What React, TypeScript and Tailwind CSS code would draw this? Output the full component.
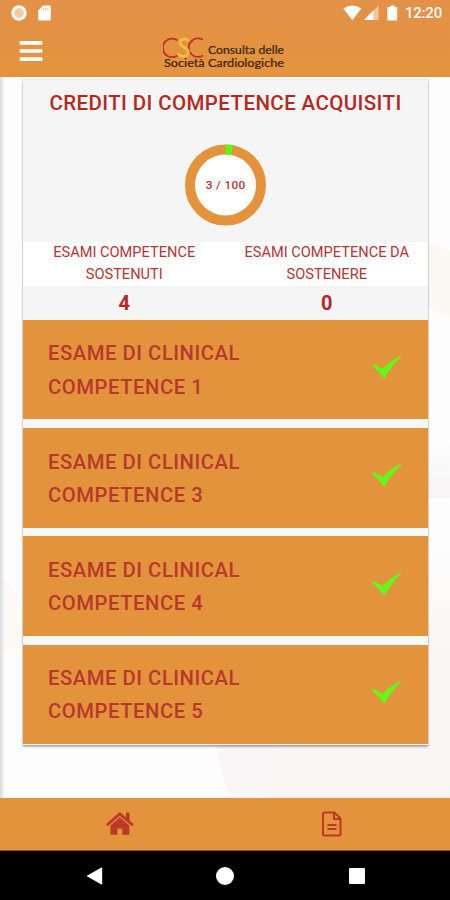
import { FaBars } from 'react-icons/fa';

const exams = [1, 3, 4, 5];

function StatusBar() {
  return (
    <div className="flex h-[26px] items-center justify-between pl-[11px] pr-2">
      <div className="flex items-center gap-[11px]">
        <svg width="16" height="16" viewBox="0 0 16 16">
          <circle cx="8" cy="8" r="5" fill="#f3c99d" />
          <circle cx="8" cy="8" r="6.2" fill="none" stroke="#fff" strokeWidth="3" />
        </svg>
        <svg width="13" height="16" viewBox="0 0 13 16">
          <path d="M5 0.5H11.5Q12.8 0.5 12.8 2V14Q12.8 15.5 11.5 15.5H1.5Q0.2 15.5 0.2 14V5.5Z" fill="#fff" />
          <path d="M5.3 3V5.5M7.6 3V5.5M9.9 3V5.5" stroke="#ecb783" strokeWidth="1" />
        </svg>
      </div>
      <div className="flex items-center">
        <svg width="19" height="16" viewBox="0 0 19 16">
          <path d="M0.3 3.6Q9.3 -2.8 18.3 3.6L9.3 15.2Z" fill="#fff" />
        </svg>
        <svg className="ml-0.5" width="15" height="16" viewBox="0 0 15 16">
          <path d="M0 15L14.5 0.5V15Z" fill="#f2c697" />
          <path d="M0 15L9.5 5.5V15Z" fill="#fff" />
        </svg>
        <svg className="ml-2" width="11" height="16" viewBox="0 0 11 16">
          <path d="M3.3 0.5H7.5V2H10.2V15.5H0.4V2H3.3Z" fill="#fff" />
        </svg>
        <span className="ml-[7px] text-[15px] leading-none font-medium tracking-[-0.2px] text-white">12:20</span>
      </div>
    </div>
  );
}

function Logo() {
  return (
    <svg width="124" height="36" viewBox="0 0 124 36">
      <g fill="none" strokeWidth="1.8">
        <path d="M14.5 4.3A9.3 9.3 0 1 0 14.5 19.5" stroke="#c32b2d" />
        <path d="M40 3.8A9.3 9.3 0 1 0 40 19.5" stroke="#c32b2d" />
        <path d="M25.5 5.5C23.5 1.5 16.5 2.5 17 7C17.5 11.5 25 11 25.3 15.8C25.5 21 18 22 15 17.5" stroke="#f7bb3d" strokeWidth="2.8" />
      </g>
      <g fill="#39250f" stroke="#39250f" strokeWidth="0.2" fontFamily="Lato, sans-serif" fontSize="10.5">
        <text x="45" y="18" textLength="76" lengthAdjust="spacingAndGlyphs">Consulta delle</text>
        <text x="1" y="30.5" textLength="120" lengthAdjust="spacingAndGlyphs">Società Cardiologiche</text>
      </g>
    </svg>
  );
}

function CreditsRing({ value, total }: { value: number; total: number }) {
  return (
    <svg className="mx-auto block" width="81" height="82" viewBox="0 0 81 82">
      <circle cx="40.5" cy="41" r="35.5" fill="#fff" stroke="#e4933d" strokeWidth="10" />
      <circle
        cx="40.5"
        cy="41"
        r="35.5"
        fill="none"
        stroke="#5df70b"
        strokeWidth="10"
        pathLength={total}
        strokeDasharray={`${value} ${total}`}
        transform="rotate(-90 40.5 41)"
      />
      <text x="40.5" y="44.7" textAnchor="middle" fill="#b03434" fontSize="11.8" fontWeight="500" textLength="39.5">
        {`${value} / ${total}`}
      </text>
    </svg>
  );
}

function ExamRow({ number }: { number: number }) {
  return (
    <div className="flex h-[99.7px] items-center justify-between bg-[#e4933d] pl-[25px] pr-[26px]">
      <p className="mt-[2px] w-[240px] text-[20.3px] leading-[33.3px] font-medium tracking-[0.52px] text-[#b7392b]">
        <span className="block h-[33.3px]">ESAME DI CLINICAL</span>
        <span className="block h-[33.3px]">{`COMPETENCE ${number}`}</span>
      </p>
      <svg className="-mt-1" width="31" height="25" viewBox="0 0 31 25">
        <path d="M0.5 10.2Q3 9 5 10L11.5 14Q19 5.5 30 0.7L30.3 1.7Q20 11.5 13.2 24Q8 16.5 0.5 10.2Z" fill="#62f81a" />
      </svg>
    </div>
  );
}

export default function App() {
  return (
    <div className="flex h-[900px] w-[450px] flex-col overflow-hidden bg-black font-[Roboto,sans-serif]">
      <header className="h-[77px] shrink-0 bg-gradient-to-b from-[#e39148] to-[#e4933d]">
        <StatusBar />
        <div className="flex h-[51px] items-center">
          <FaBars className="-mt-0.5 ml-[18px] text-[26px] text-white" />
          <div className="mt-1 ml-[119px]">
            <Logo />
          </div>
        </div>
      </header>

      <main className="relative h-[721px] shrink-0 overflow-hidden bg-[#fdfdfd] pt-[3px] pr-[22px] pl-[23px]">
        <svg className="absolute inset-0" width="450" height="721" viewBox="0 0 450 721">
          <defs>
            <linearGradient id="band" x1="0" y1="0" x2="0" y2="1">
              <stop offset="0" stopColor="#fdfdfd" />
              <stop offset="1" stopColor="#f6f4f5" />
            </linearGradient>
            <linearGradient id="fade" x1="0" y1="0" x2="0" y2="1">
              <stop offset="0" stopColor="#fdfdfd" />
              <stop offset="0.5" stopColor="#f9f5f4" />
            </linearGradient>
          </defs>
          <path d="M425 166Q438 168 450 175V242L425 228Z" fill="#fcf9f5" />
          <path d="M0 500Q30 520 24 568L0 575Z" fill="#fcf9f7" />
          <path d="M425 365H450V421H425Z" fill="url(#band)" />
          <path d="M425 470H450V721H425Z" fill="url(#fade)" />
          <path d="M214 640Q214 681 231 721H425V640Z" fill="#f8f6f7" />
          <path d="M425 640H300Q270 680 265 721H450V640Z" fill="#f9f5f4" />
        </svg>
        <div className="absolute inset-y-0 left-0 w-[5px] bg-gradient-to-r from-[#dadada] to-transparent" />
        <section className="relative h-[664.5px] bg-[#f5f5f5] shadow-[0_0_0_1px_rgba(0,0,0,0.08),0_2px_2px_rgba(0,0,0,0.3)]">
          <h1 className="pt-[11px] text-center text-[20.5px] leading-6 font-medium tracking-[0.4px] text-[#b52822]">
            CREDITI DI COMPETENCE ACQUISITI
          </h1>
          <div className="h-[127px] pt-[29px]">
            <CreditsRing value={3} total={100} />
          </div>
          <div className="grid h-[44px] grid-cols-2 bg-white text-center text-[14.6px] leading-[21.6px] text-[#b23434]">
            <p className="px-5">ESAMI COMPETENCE SOSTENUTI</p>
            <p className="px-2">ESAMI COMPETENCE DA SOSTENERE</p>
          </div>
          <div className="grid h-[33.8px] grid-cols-2 text-center text-[20px] leading-[34px] font-bold text-[#b52822]">
            <span>4</span>
            <span>0</span>
          </div>
          <div className="flex flex-col gap-[8.6px] bg-[#f8f8f8]">
            {exams.map((n) => (
              <ExamRow key={n} number={n} />
            ))}
          </div>
        </section>
      </main>

      <nav className="grid h-[53px] shrink-0 grid-cols-2 border-b border-[#8b5a25] bg-[#e4933d] text-[#bc3829]">
        <div className="flex items-center justify-center pl-[14px]">
          <svg width="28" height="24" viewBox="0 0 28 24" fill="currentColor">
            <path d="M13.8 0L20 5.3V0.6H23.5V8.4L27.7 12.1L26 14.2L13.8 3.8L1.7 14.2L0 12.1Z" />
            <path d="M13.8 5.3L23.3 13.4V22.7H16.3V16.5H11.4V22.7H4.4V13.4Z" />
          </svg>
        </div>
        <div className="flex items-center justify-center pr-[12px]">
          <svg width="20" height="26" viewBox="0 0 20 26" fill="none" stroke="currentColor" strokeWidth="2">
            <path d="M2.5 1.5H12.5L18.5 7.5V23Q18.5 24.5 17 24.5H2.5Q1 24.5 1 23V3Q1 1.5 2.5 1.5Z" />
            <path d="M12 2V8H18M5.5 14H14.5M5.5 18H14.5" />
          </svg>
        </div>
      </nav>

      <footer className="flex h-[49px] items-center bg-black text-white">
        <svg className="ml-[86px]" width="17" height="18" viewBox="0 0 17 18" fill="currentColor">
          <path d="M0.5 9L15 0.7Q16.2 0 16.2 1.4V16.6Q16.2 18 15 17.3Z" />
        </svg>
        <span className="ml-[113px] size-[18px] rounded-full bg-white" />
        <span className="ml-[115px] size-[16px] rounded-[1px] bg-white" />
      </footer>
    </div>
  );
}
